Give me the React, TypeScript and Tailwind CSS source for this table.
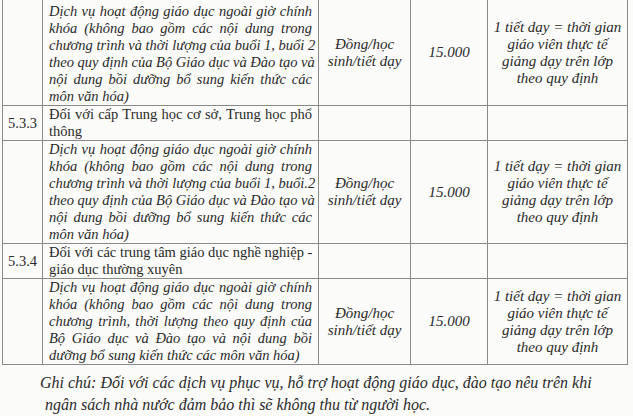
import React from 'react';

const SERVICE_ROW_A = [
  'Dịch vụ hoạt động giáo dục ngoài giờ chính',
  'khóa (không bao gồm các nội dung trong',
  'chương trình và thời lượng của buổi 1, buổi 2',
  'theo quy định của Bộ Giáo dục và Đào tạo và',
  'nội dung bồi dưỡng bổ sung kiến thức các',
  'môn văn hóa)',
];

const SERVICE_ROW_B = [
  'Dịch vụ hoạt động giáo dục ngoài giờ chính',
  'khóa (không bao gồm các nội dung trong',
  'chương trình và thời lượng của buổi 1, buổi.2',
  'theo quy định của Bộ Giáo dục và Đào tạo và',
  'nội dung bồi dưỡng bổ sung kiến thức các',
  'môn văn hóa)',
];

const SERVICE_ROW_C = [
  'Dịch vụ hoạt động giáo dục ngoài giờ chính',
  'khóa (không bao gồm các nội dung trong',
  'chương trình, thời lượng theo quy định của',
  'Bộ Giáo dục và Đào tạo và nội dung bồi',
  'dưỡng bổ sung kiến thức các môn văn hóa)',
];

const NOTE_LINES = ['1 tiết dạy = thời gian', 'giáo viên thực tế', 'giảng dạy trên lớp', 'theo quy định'];

const cell = 'border border-[#8a8a8a] align-middle p-0';

// each printed line is its own block so wrapping matches the scan exactly
const JustifiedLines: React.FC<{ lines: string[] }> = ({ lines }) => (
  <>
    {lines.map((line, i) => (
      <div
        key={i}
        className={`whitespace-nowrap ${i < lines.length - 1 ? 'text-justify [text-align-last:justify]' : 'text-left'}`}
      >
        {line}
      </div>
    ))}
  </>
);

const ServiceRow: React.FC<{ lines: string[]; price: string; first?: boolean }> = ({ lines, price, first }) => (
  <tr>
    <td className={`${cell} ${first ? 'border-t-0' : ''}`} />
    <td className={`${cell} ${first ? 'border-t-0 pt-[3px]' : ''} px-[6px] italic`}>
      <JustifiedLines lines={lines} />
    </td>
    <td className={`${cell} ${first ? 'border-t-0' : ''} text-center text-[15px] italic`}>
      Đồng/học
      <br />
      sinh/tiết dạy
    </td>
    <td className={`${cell} ${first ? 'border-t-0' : ''} text-center text-[15px] italic`}>{price}</td>
    <td className={`${cell} ${first ? 'border-t-0' : ''} text-center text-[15px] italic`}>
      {NOTE_LINES.map((l) => (
        <div key={l}>{l}</div>
      ))}
    </td>
  </tr>
);

const SectionRow: React.FC<{ code: string; lines: string[] }> = ({ code, lines }) => (
  <tr>
    <td className={`${cell} text-center`}>{code}</td>
    <td className={`${cell} px-[6px]`}>
      <JustifiedLines lines={lines} />
    </td>
    <td className={cell} />
    <td className={cell} />
    <td className={cell} />
  </tr>
);

export default function App() {
  return (
    <div className="h-[416px] w-[633px] overflow-hidden bg-[#fbfbf9] font-['Liberation_Serif','Times_New_Roman',serif] text-[#2a2a2a]">
      <table className="ml-[2px] w-[625px] table-fixed border-collapse text-[14.5px] leading-[17px]">
        <colgroup>
          <col className="w-[40px]" />
          <col className="w-[276px]" />
          <col className="w-[92px]" />
          <col className="w-[77px]" />
          <col className="w-[140px]" />
        </colgroup>
        <tbody>
          <ServiceRow lines={SERVICE_ROW_A} price="15.000" first />
          <SectionRow code="5.3.3" lines={['Đối với cấp Trung học cơ sở, Trung học phổ', 'thông']} />
          <ServiceRow lines={SERVICE_ROW_B} price="15.000" />
          <SectionRow code="5.3.4" lines={['Đối với các trung tâm giáo dục nghề nghiệp -', 'giáo dục thường xuyên']} />
          <ServiceRow lines={SERVICE_ROW_C} price="15.000" />
        </tbody>
      </table>

      <div className="mt-[7px] pl-[40px] text-[16px] italic leading-[22px]">
        <div>Ghi chú: Đối với các dịch vụ phục vụ, hỗ trợ hoạt động giáo dục, đào tạo nêu trên khi</div>
        <div className="pl-[5px]">ngân sách nhà nước đảm bảo thì sẽ không thu từ người học.</div>
      </div>
    </div>
  );
}
